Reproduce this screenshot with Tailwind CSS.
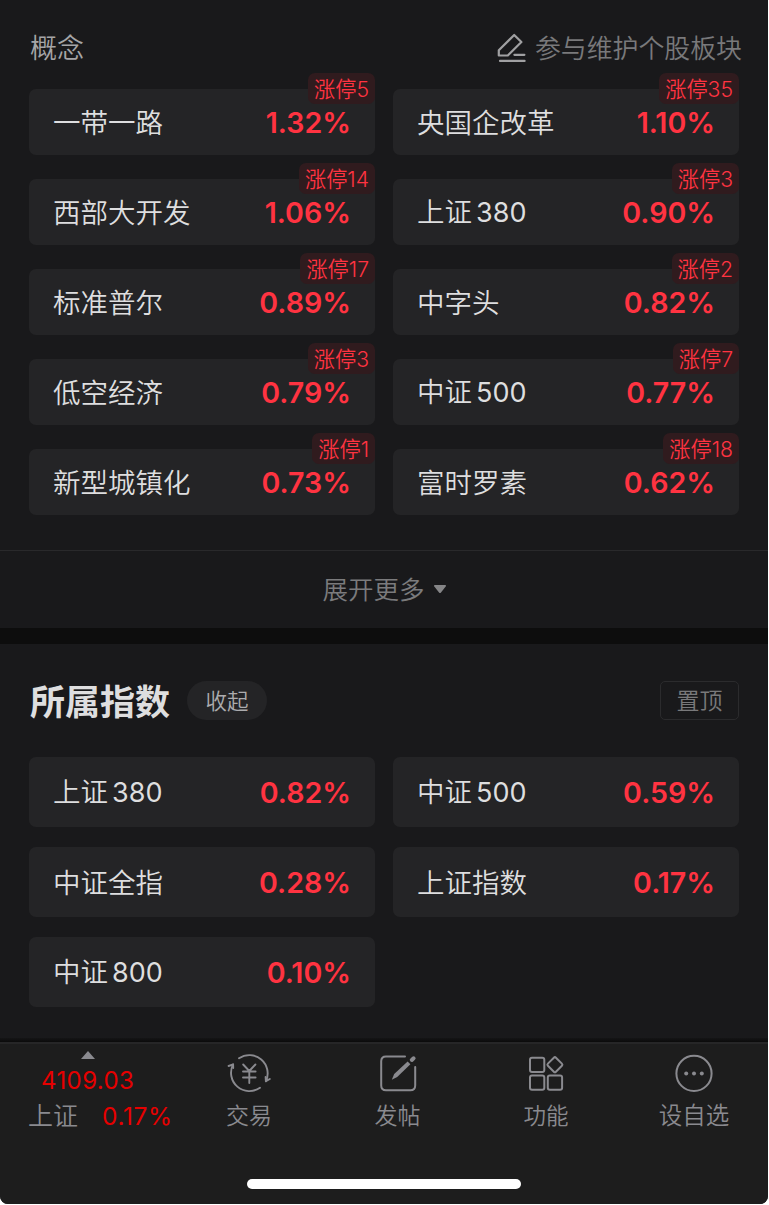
<!DOCTYPE html>
<html lang="zh-CN">
<head>
  <meta charset="UTF-8" />
  <meta name="viewport" content="width=device-width, initial-scale=1" />
  <title>所属板块</title>
  <script src="https://cdn.jsdelivr.net/npm/@tailwindcss/browser@4"></script>
</head>
<body class="bg-white font-[350] font-['Inter','Noto_Sans_CJK_SC',sans-serif]">
  <div class="w-[768px] h-[1204px] flex flex-col bg-[#19191b] rounded-b-lg overflow-hidden whitespace-nowrap">

    <!-- 概念 -->
    <section class="h-[550px] shrink-0 pl-[29px] pr-[29px]">
      <div class="h-[89px] pt-[29px] flex items-start justify-between">
        <h2 class="pl-px text-[27px] leading-10 text-[#a5a5a7]">概念</h2>
        <div class="flex items-center -mr-[3px] text-[#79797b]">
          <svg class="w-[30px] h-[30px] mr-[9px] mb-[3px]" viewBox="0 0 30 30" fill="none" stroke="#a0a0a2" stroke-width="2.2" stroke-linecap="round" stroke-linejoin="round">
            <path d="M2.8 22.5V17.2L18.2 2L25.4 9L11.8 22.5Z" />
            <path d="M18.4 21.8H28.4M4 27.9H28.6" />
          </svg>
          <span class="text-[25.9px] leading-10">参与维护个股板块</span>
        </div>
      </div>
      <div id="concepts" class="grid grid-cols-2 gap-x-[18px] gap-y-[24px]"></div>
    </section>

    <div class="h-[78px] shrink-0 border-t border-[#29292b] flex items-center justify-center text-[#7b7b7d]">
      <span class="pt-[2px] text-[25.5px]">展开更多</span>
      <svg class="ml-[9px] mb-px w-3 h-2" viewBox="0 0 12 8" fill="#858587"><path d="M0.6 0H11.4Q12.3 0.4 11.7 1.4L7 7.4Q6 8.4 5 7.4L0.3 1.4Q-0.3 0.4 0.6 0Z" /></svg>
    </div>

    <div class="h-[16px] shrink-0 bg-[#0d0d0d]"></div>

    <!-- 所属指数 -->
    <section class="h-[394px] shrink-0 pl-[29px] pr-[29px]">
      <div class="h-[113px] flex items-center">
        <h2 class="pt-[3px] pl-px text-[35px] leading-none font-bold text-[#dededf]">所属指数</h2>
        <button class="ml-[17px] w-20 h-[39px] pt-px rounded-full bg-[#242426] text-[21.5px] text-[#acacae]">收起</button>
        <button class="ml-auto w-[79px] h-[39px] pt-px rounded-[5px] border border-[#2b2b2d] text-[23px] text-[#79797b]">置顶</button>
      </div>
      <div id="indexes" class="grid grid-cols-2 gap-x-[18px] gap-y-[20px]"></div>
    </section>

    <div class="h-[4px] shrink-0 bg-linear-to-b from-[#151516] to-[#0b0b0b]"></div>

    <nav class="grow border-t-2 border-[#262627] bg-[#1d1d1d] flex flex-col text-[#8a8a8f]">
      <div class="h-[92px] flex">
        <div class="w-[175px] pt-[7px]">
          <svg class="ml-[81px] w-[14px] h-2" viewBox="0 0 14 8" fill="#8a8a8f"><path d="M0 8L7 0L14 8Z" /></svg>
          <div class="ml-[41px] mt-[5px] text-[24px] leading-[34px] tracking-[0.4px] font-normal text-[#e60000]">4109.03</div>
          <div class="ml-[28px] flex items-center leading-[34px]">
            <span class="pt-px text-[25px]">上证</span>
            <span class="ml-[24px] text-[24.5px] tracking-[0.6px] font-normal text-[#e60000]">0.17%</span>
          </div>
        </div>
        <a class="w-[148px] flex flex-col items-center pt-[8px]">
          <svg class="w-[44px] h-[42px]" viewBox="0 0 44 42" fill="none" stroke="#8a8a8f" stroke-width="1.9" stroke-linecap="round" stroke-linejoin="round">
            <path d="M12 6.3A18.3 18.3 0 0 1 38.9 29.2L42.8 27" />
            <path d="M33 35.7A18.3 18.3 0 0 1 6.1 12.4L1.6 14" />
            <path d="M38.9 29.2L38.6 25M6.1 12.4L6.2 16" />
            <path d="M16.2 12.5L22.3 19L28.4 12.5M16 19.5H28.6M16 25.5H28.6M22.3 19.5V31" />
          </svg>
          <span class="text-[23px] leading-[34px] mt-[5px]">交易</span>
        </a>
        <a class="w-[149px] flex flex-col items-center pt-[8px]">
          <svg class="w-[42px] h-[42px]" viewBox="0 0 42 42" fill="none" stroke="#8a8a8f" stroke-width="2" stroke-linecap="round">
            <path d="M28 4.4H9Q4.2 4.4 4.2 9.2V33.4Q4.2 38.2 9 38.2H33.4Q38.2 38.2 38.2 33.4V15" />
            <path d="M14.8 27.8L17.2 22L30.6 9.4L33.4 12.2L20.2 25Z" fill="#8a8a8f" stroke="none" />
            <path d="M34.8 7.9L36.6 6.3" stroke-width="4" />
          </svg>
          <span class="text-[23px] leading-[34px] mt-[5px]">发帖</span>
        </a>
        <a class="w-[148px] flex flex-col items-center pt-[8px]">
          <svg class="w-[42px] h-[42px]" viewBox="0 0 42 42" fill="none" stroke="#8a8a8f" stroke-width="2" stroke-linejoin="round">
            <rect x="5" y="5.8" width="14.3" height="14.3" rx="2" />
            <rect x="5" y="23.5" width="14.3" height="14.3" rx="2" />
            <rect x="22.8" y="23.5" width="14.3" height="14.3" rx="2" />
            <rect x="24.2" y="7" width="11.4" height="11.4" rx="1.5" transform="rotate(45 29.9 12.7)" />
          </svg>
          <span class="text-[22.5px] leading-[34px] mt-[5px]">功能</span>
        </a>
        <a class="w-[148px] flex flex-col items-center pt-[8px]">
          <svg class="w-[42px] h-[42px]" viewBox="0 0 42 42" fill="none" stroke="#8a8a8f" stroke-width="2">
            <circle cx="21" cy="21.4" r="17.6" />
            <g fill="#8a8a8f" stroke="none"><circle cx="13.2" cy="21.4" r="2" /><circle cx="21" cy="21.4" r="2" /><circle cx="28.8" cy="21.4" r="2" /></g>
          </svg>
          <span class="text-[23.5px] leading-[34px] mt-[5px]">设自选</span>
        </a>
      </div>
      <div class="mt-[43px] mx-auto w-[274px] h-[10px] rounded-full bg-white"></div>
    </nav>
  </div>

  <script>
    const concepts = [
      { name: "一带一路", change: "1.32%", limitUp: 5 },
      { name: "央国企改革", change: "1.10%", limitUp: 35 },
      { name: "西部大开发", change: "1.06%", limitUp: 14 },
      { name: "上证", num: "380", change: "0.90%", limitUp: 3 },
      { name: "标准普尔", change: "0.89%", limitUp: 17 },
      { name: "中字头", change: "0.82%", limitUp: 2 },
      { name: "低空经济", change: "0.79%", limitUp: 3 },
      { name: "中证", num: "500", change: "0.77%", limitUp: 7 },
      { name: "新型城镇化", change: "0.73%", limitUp: 1 },
      { name: "富时罗素", change: "0.62%", limitUp: 18 }
    ];

    const indexes = [
      { name: "上证", num: "380", change: "0.82%" },
      { name: "中证", num: "500", change: "0.59%" },
      { name: "中证全指", change: "0.28%" },
      { name: "上证指数", change: "0.17%" },
      { name: "中证", num: "800", change: "0.10%" }
    ];

    function render(id, items, heightClass) {
      const container = document.getElementById(id);
      items.forEach(item => {
        const card = document.createElement("div");
        card.className = "relative flex items-center justify-between pt-px pl-[24px] pr-[24px] rounded-[7px] bg-[#242426] " + heightClass;
        card.innerHTML = `
          <span class="text-[27.5px] leading-10 text-[#dededf]">${item.name}${item.num ? `<span class="ml-[4px] text-[27px] font-normal">${item.num}</span>` : ""}</span>
          <span class="pt-px text-[28.6px] leading-10 font-semibold text-[#ff3341]">${item.change}</span>
          ${item.limitUp ? `<span class="absolute right-0 -top-[16px] h-[31px] px-[6px] rounded-[7px] bg-[#301b1e] text-[21.2px] leading-[33px] text-[#ff3341]">涨停${item.limitUp}</span>` : ""}`;
        container.appendChild(card);
      });
    }

    render("concepts", concepts, "h-[66px]");
    render("indexes", indexes, "h-[70px]");
  </script>
</body>
</html>
